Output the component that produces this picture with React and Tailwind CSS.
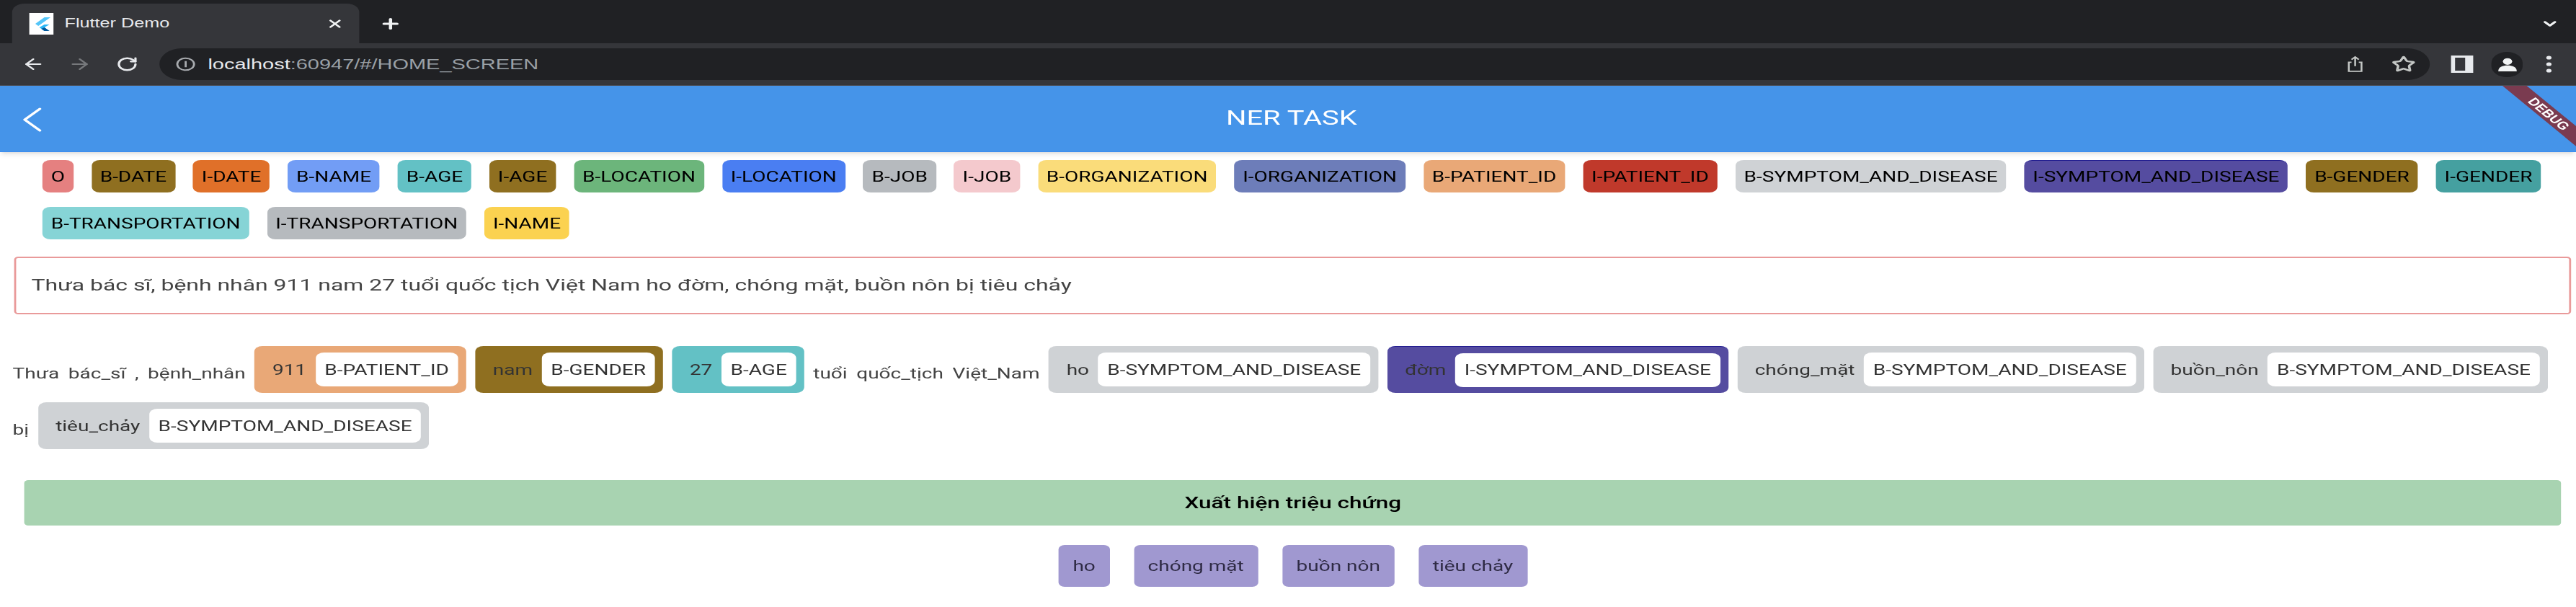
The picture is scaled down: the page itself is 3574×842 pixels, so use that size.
import React from "react";
import { ArrowLeft, ArrowRight, RotateCw, Star, ChevronDown, ChevronLeft, X, Plus } from "lucide-react";

const legend = [
  { label: "O", color: "bg-[#e58080]" },
  { label: "B-DATE", color: "bg-[#8f6f20]" },
  { label: "I-DATE", color: "bg-[#e07029]" },
  { label: "B-NAME", color: "bg-[#729df5]" },
  { label: "B-AGE", color: "bg-[#63c1c5]" },
  { label: "I-AGE", color: "bg-[#8f6f20]" },
  { label: "B-LOCATION", color: "bg-[#6cb57b]" },
  { label: "I-LOCATION", color: "bg-[#4a7ef2]" },
  { label: "B-JOB", color: "bg-[#b6babe]" },
  { label: "I-JOB", color: "bg-[#f4c9cd]" },
  { label: "B-ORGANIZATION", color: "bg-[#fadc7a]" },
  { label: "I-ORGANIZATION", color: "bg-[#6d7db9]" },
  { label: "B-PATIENT_ID", color: "bg-[#e9a877]" },
  { label: "I-PATIENT_ID", color: "bg-[#c0392b]" },
  { label: "B-SYMPTOM_AND_DISEASE", color: "bg-[#cfd2d5]" },
  { label: "I-SYMPTOM_AND_DISEASE", color: "bg-[#554ca0] border-t border-[#1f1a8f]" },
  { label: "B-GENDER", color: "bg-[#8f6f20]" },
  { label: "I-GENDER", color: "bg-[#45a0a0]" },
  { label: "B-TRANSPORTATION", color: "bg-[#86d4d6]" },
  { label: "I-TRANSPORTATION", color: "bg-[#b6babe]" },
  { label: "I-NAME", color: "bg-[#fbd250]" },
];

const tokens = [
  { text: "Thưa" },
  { text: "bác_sĩ" },
  { text: "," },
  { text: "bệnh_nhân" },
  { text: "911", label: "B-PATIENT_ID", color: "bg-[#e9a877]" },
  { text: "nam", label: "B-GENDER", color: "bg-[#8f6f20]" },
  { text: "27", label: "B-AGE", color: "bg-[#63c1c5]" },
  { text: "tuổi" },
  { text: "quốc_tịch" },
  { text: "Việt_Nam" },
  { text: "ho", label: "B-SYMPTOM_AND_DISEASE", color: "bg-[#cfd2d5]" },
  { text: "đờm", label: "I-SYMPTOM_AND_DISEASE", color: "bg-[#554ca0] border-t border-[#1f1a8f]" },
  { text: "chóng_mặt", label: "B-SYMPTOM_AND_DISEASE", color: "bg-[#cfd2d5]" },
  { text: "buồn_nôn", label: "B-SYMPTOM_AND_DISEASE", color: "bg-[#cfd2d5]" },
  { text: "bị" },
  { text: "tiêu_chảy", label: "B-SYMPTOM_AND_DISEASE", color: "bg-[#cfd2d5]" },
];

const symptoms = ["ho", "chóng mặt", "buồn nôn", "tiêu chảy"];

const FlutterIcon = () => (
  <div className="flex h-[30px] w-[24px] items-center justify-center bg-white">
    <svg viewBox="0 0 24 30" className="h-[30px] w-[24px]">
      <path d="M15 6 L6 15 L9 18 L21 6 Z" fill="#54c5f8" />
      <path d="M15 16 L10 20 L15 25 L20 25 L15 20 L20 16 Z" fill="#29b6f6" />
      <path d="M12 22 L15 25 L20 25 L15 20 Z" fill="#01579b" />
    </svg>
  </div>
);

const ShareIcon = () => (
  <svg viewBox="0 0 20 26" className="h-[26px] w-[18px]" fill="none" stroke="#c4c7c5" strokeWidth="2">
    <path d="M6 10 H3 V24 H17 V10 H14" />
    <path d="M10 16 V2 M6 6 L10 2 L14 6" />
  </svg>
);

const SideIcon = () => (
  <div className="flex h-[24px] w-[22px] bg-[#e8eaed] py-[3px] pl-[4px] pr-[8px]">
    <div className="h-full w-full bg-[#35363a]" />
  </div>
);

const ProfileIcon = () => (
  <div className="flex h-[35px] w-[31px] items-center justify-center rounded-full bg-[#202124]">
    <svg viewBox="0 0 24 24" className="h-[24px] w-[22px]" fill="#f1f3f4">
      <circle cx="12" cy="8" r="5" />
      <path d="M2 23 C2 16 7 14 12 14 C17 14 22 16 22 23 Z" />
    </svg>
  </div>
);

const BrowserChrome = () => (
  <div className="font-['Liberation_Sans',sans-serif]">
    <div className="flex h-[60px] items-end bg-[#202124] pl-[12px] pr-[16px]">
      <div className="flex h-[55px] w-[344px] items-center rounded-t-xl bg-[#35363a] pl-[17px] pr-[15px]">
        <FlutterIcon />
        <span className="ml-[11px] text-[18px] text-[#e8eaed]">Flutter Demo</span>
        <X size={18} strokeWidth={3} className="ml-auto text-[#f1f3f4]" />
      </div>
      <Plus size={22} strokeWidth={3.5} className="mb-[16px] ml-[20px] text-[#f1f3f4]" />
      <ChevronDown size={20} strokeWidth={3} className="mb-[17px] ml-auto text-[#f1f3f4]" />
    </div>
    <div className="flex h-[59px] items-center border-b border-[#4a4b4f] bg-[#35363a] pl-[21px] pr-[20px]">
      <ArrowLeft size={24} className="text-[#e8eaed]" />
      <ArrowRight size={24} className="ml-[22px] text-[#77797c]" />
      <RotateCw size={22} strokeWidth={2.5} className="ml-[24px] text-[#e8eaed]" />
      <div className="ml-[21px] flex h-[44px] w-[2250px] items-center rounded-full bg-[#202124] pl-[16px] pr-[14px]">
        <svg viewBox="0 0 24 24" className="h-[24px] w-[20px]" fill="none" stroke="#a8abaf" strokeWidth="2.4">
          <circle cx="12" cy="12" r="10" />
          <path d="M12 7 V17" />
        </svg>
        <span className="ml-[12px] text-[20.7px] text-[#9aa0a6]">
          <span className="text-[#e8eaed]">localhost</span>:60947/#/HOME_SCREEN
        </span>
        <div className="ml-auto flex items-center gap-[27px]">
          <ShareIcon />
          <Star size={24} strokeWidth={2.5} className="text-[#c4c7c5]" />
        </div>
      </div>
      <div className="ml-[21px]"><SideIcon /></div>
      <div className="ml-[18px]"><ProfileIcon /></div>
      <svg viewBox="0 0 6 24" className="ml-[23px] h-[24px] w-[6px]" fill="#e8eaed">
        <circle cx="3" cy="3" r="2.6" />
        <circle cx="3" cy="12" r="2.6" />
        <circle cx="3" cy="21" r="2.6" />
      </svg>
    </div>
  </div>
);

const AppHeader = () => (
  <div className="relative flex h-[92px] items-center justify-center border-b border-[#3a8df0] bg-[#4594e9] shadow-md">
    <ChevronLeft size={60} strokeWidth={1.2} className="absolute left-[2px] top-[17px] text-white" />
    <h1 className="ml-[7px] text-[28.5px] text-white">NER TASK</h1>
    <svg viewBox="0 0 73 84" className="absolute right-0 top-0 h-[84px] w-[73px]">
      <polygon points="0,0 24,0 73,56 73,84" fill="#7a3b50" />
      <text x="46" y="39" transform="rotate(49 46 39)" textAnchor="middle" dominantBaseline="central" fontFamily="Liberation Sans" fontWeight="700" fontSize="15" fill="#fff">DEBUG</text>
    </svg>
  </div>
);

const NerToken = ({ token }) => {
  if (!token.label) {
    return <span className="mb-[12px] self-end text-[#444]">{token.text}</span>;
  }
  return (
    <div className={`flex h-[65px] items-center gap-[9px] rounded-lg pl-[17.5px] pr-[8px] ${token.color}`}>
      <span className="text-[#333]">{token.text}</span>
      <span className="flex h-[47px] items-center rounded-lg bg-white px-[9px] text-[#333]">{token.label}</span>
    </div>
  );
};

export default function App() {
  return (
    <div className="h-[842px] overflow-hidden bg-white blur-[0.5px]">
      {/* the reference is stretched sideways, so the whole page is laid out narrow and scaled */}
      <div className="h-[842px] w-[2552.86px] origin-top-left scale-x-[1.4] font-['Roboto',sans-serif] text-[20px]">
        <BrowserChrome />
        <AppHeader />

        <div className="mt-[11px] flex flex-wrap gap-x-[17.8px] gap-y-[20px] pl-[42px] pr-[20px]">
          {legend.map((tag) => (
            <span key={tag.label} className={`flex h-[45px] items-center rounded-lg px-[8.5px] text-black ${tag.color}`}>
              {tag.label}
            </span>
          ))}
        </div>

        <div className="ml-[13.5px] mr-[5px] mt-[24px] flex h-[80px] items-center rounded border-2 border-[#e99a9a] pl-[15.5px] text-[22.8px] text-[#444]">
          Thưa bác sĩ, bệnh nhân 911 nam 27 tuổi quốc tịch Việt Nam ho đờm, chóng mặt, buồn nôn bị tiêu chảy
        </div>

        <div className="mt-[44px] flex flex-wrap gap-x-[9px] gap-y-[13px] pl-[12.5px] pr-[15px]">
          {tokens.map((token, index) => (
            <NerToken key={index} token={token} />
          ))}
        </div>

        <div className="ml-[24.3px] mr-[14.5px] mt-[43px] flex h-[63px] items-center justify-center rounded bg-[#a8d3b1] text-[22.5px] font-medium text-black">
          Xuất hiện triệu chứng
        </div>

        <div className="ml-[24.3px] mr-[14.5px] mt-[27px] flex justify-center gap-[24px]">
          {symptoms.map((symptom) => (
            <span key={symptom} className="flex h-[58px] items-center rounded-md bg-[#a098d0] px-[14px] text-[#2f2b45]">
              {symptom}
            </span>
          ))}
        </div>
      </div>
    </div>
  );
}
